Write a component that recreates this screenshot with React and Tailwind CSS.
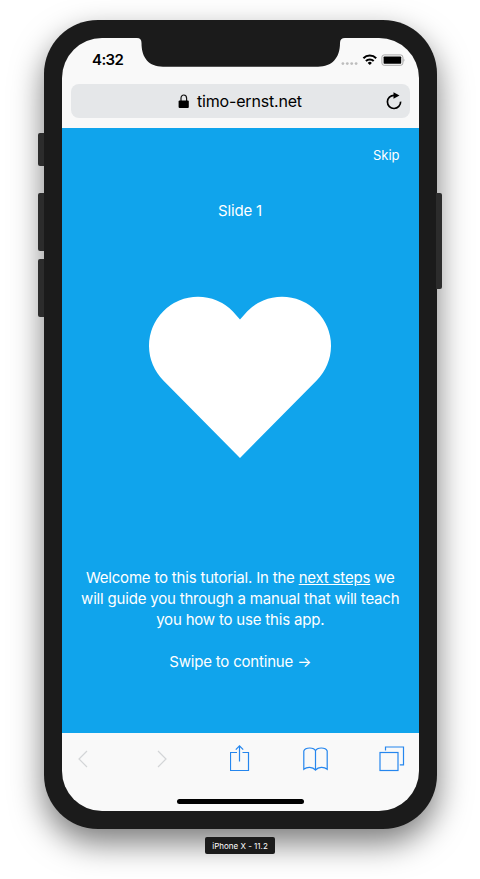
import React from "react";

function StatusBar() {
  return (
    <div className="flex h-[46px] shrink-0 items-start justify-between pl-[30px] pr-[14px]">
      <span className="mt-[13px] text-[15px] leading-[18px] font-semibold tracking-[-0.6px] text-black">4:32</span>
      <svg className="mt-[15px]" width="64" height="14" viewBox="0 0 64 14">
        <g fill="#bdbdbd">
          <circle cx="1.9" cy="10.6" r="1.4" />
          <circle cx="6.3" cy="10.6" r="1.4" />
          <circle cx="10.7" cy="10.6" r="1.4" />
          <circle cx="15.1" cy="10.6" r="1.4" />
        </g>
        <g fill="none" stroke="#000" strokeWidth="2">
          <path d="M22.4 5.2a9 9 0 0 1 12.8 0" />
          <path d="M24.9 8a5.5 5.5 0 0 1 7.8 0" />
        </g>
        <path d="M26.7 9.9a3 3 0 0 1 4.2 0l-2.1 2.1z" />
        <rect x="40.9" y="1.9" width="21" height="10.4" rx="2.3" fill="none" stroke="#aaa" strokeWidth="1" />
        <rect x="42.6" y="3.5" width="17.6" height="7.2" rx="0.7" />
        <path d="M62.6 5.3q1.6 1.8 0 3.6z" fill="#999" />
      </svg>
    </div>
  );
}

function AddressBar() {
  return (
    <div className="mx-[9px] flex h-[34px] shrink-0 items-center rounded-[8px] bg-[#e5e7e9] pl-[107px] pr-[7px]">
      <svg width="12" height="15" viewBox="0 0 12 15">
        <path d="M3 7V4.2a2.8 3.2 0 0 1 5.6 0V7" fill="none" stroke="#111" strokeWidth="1.2" />
        <rect x="0.6" y="6.4" width="10.2" height="7.6" rx="1" fill="#000" />
      </svg>
      <span className="ml-[7px] whitespace-nowrap text-[16px] leading-[20px] tracking-[-0.18px] text-black">timo-ernst.net</span>
      <svg className="ml-auto" width="18" height="20" viewBox="0 0 18 20">
        <path d="M9.2 4.3A6.6 6.6 0 1 0 15.6 10.6" fill="none" stroke="#000" strokeWidth="1.7" />
        <path d="M8.5 1.2l6 3.3-6 3.2z" />
      </svg>
    </div>
  );
}

function Slide() {
  return (
    <main className="mt-[9.5px] flex h-[605px] shrink-0 flex-col items-center bg-[#10a4ec] text-white">
      <span className="mr-[19.5px] mt-[17.5px] self-end text-[13px] leading-[20px]">Skip</span>
      <h1 className="mr-[1px] mt-[35px] text-[15px] leading-[21px] tracking-[-0.15px]">Slide 1</h1>
      <svg className="mr-[1px] mt-[75px]" width="182" height="164" viewBox="0 0 182 164" fill="#fff">
        <path d="M91 23.5L83.65 15.2A49 49 0 1 0 14.35 84.5L91 162l76.65-77.5A49 49 0 1 0 98.35 15.2Z" />
      </svg>
      <div className="mr-[0.5px] mt-[106.5px] whitespace-nowrap text-center text-[15px] leading-[21px] tracking-[-0.19px]">
        <p>Welcome to this tutorial. In the <u>next steps</u> we</p>
        <p>will guide you through a manual that will teach</p>
        <p>you how to use this app.</p>
        <p className="mt-[21px]">Swipe to continue →</p>
      </div>
    </main>
  );
}

function Toolbar() {
  return (
    <nav className="flex h-[52px] shrink-0 items-center pl-[16px]">
      <svg width="10" height="18" viewBox="0 0 10 18" fill="none" stroke="#d3d5d7" strokeWidth="1.2">
        <path d="M9 1L1 9l8 8" />
      </svg>
      <svg className="ml-[69px]" width="10" height="18" viewBox="0 0 10 18" fill="none" stroke="#d3d5d7" strokeWidth="1.2">
        <path d="M1 1l8 8-8 8" />
      </svg>
      <svg className="-mt-[2px] ml-[63px]" width="20" height="28" viewBox="0 0 20 28" fill="none" stroke="#2586ee" strokeWidth="1.2">
        <path d="M7 8.5H.5v18h18v-18h-6" />
        <path d="M9.5 17.5V2M5.8 5.7l3.7-3.9 3.7 3.9" />
      </svg>
      <svg className="ml-[53px]" width="26" height="26" viewBox="0 0 26 26" fill="none" stroke="#2586ee" strokeWidth="1.2">
        <path d="M12.5 4.9C11 1 2.4 1 .8 4.9V23.3C4 20.6 9.5 20.6 12.5 24C15.5 20.6 21 20.6 24.2 23.3V4.9C22.6 1 14 1 12.5 4.9V24" />
      </svg>
      <svg className="ml-[50px]" width="26" height="26" viewBox="0 0 26 26" fill="none" stroke="#2586ee" strokeWidth="1.2">
        <rect x="1" y="6.5" width="18" height="18" />
        <path d="M6.5 4.5V1h18v17.8h-3.7" />
      </svg>
    </nav>
  );
}

export default function App() {
  return (
    <div className="flex h-[879px] w-[480px] flex-col items-start overflow-hidden bg-white pt-[20px] font-['Inter',sans-serif]">
      <div className="relative ml-[44px] h-[809px] w-[392.5px] shrink-0 rounded-[54px] bg-[#1b1b1b] py-[18px] pl-[18px] pr-[17.5px] shadow-[0_14px_32px_rgba(0,0,0,0.52)]">
        <i className="absolute -left-[6px] top-[113px] h-[33px] w-[6px] rounded-l-[2px] bg-[#2c2c2c]" />
        <i className="absolute -left-[6px] top-[173px] h-[58px] w-[6px] rounded-l-[2px] bg-[#2c2c2c]" />
        <i className="absolute -left-[6px] top-[239px] h-[58px] w-[6px] rounded-l-[2px] bg-[#2c2c2c]" />
        <i className="absolute -right-[5.5px] top-[173px] h-[96px] w-[6px] rounded-r-[2px] bg-[#2c2c2c]" />
        <div className="relative flex h-full w-full flex-col overflow-hidden rounded-[40px] bg-[#f9f9f9]">
          <svg className="absolute left-[75px] top-0" width="208" height="29" viewBox="0 0 208 29" fill="#1b1b1b">
            <path d="M0 0Q4.5 0 4.5 5C4.5 20 12 28.7 26 28.7H181C195 28.7 203 20 203 5Q203 0 208 0Z" />
          </svg>
          <StatusBar />
          <AddressBar />
          <Slide />
          <Toolbar />
          <div className="ml-[115px] mt-[14.5px] h-[5px] w-[127px] shrink-0 rounded-full bg-black" />
        </div>
      </div>
      <div className="relative ml-[205px] mt-[8px] flex h-[17px] w-[70px] items-center justify-center rounded-[2px] bg-[#1b1b1b] text-[8px] leading-[10px] text-white">
        iPhone X - 11.2
      </div>
    </div>
  );
}
